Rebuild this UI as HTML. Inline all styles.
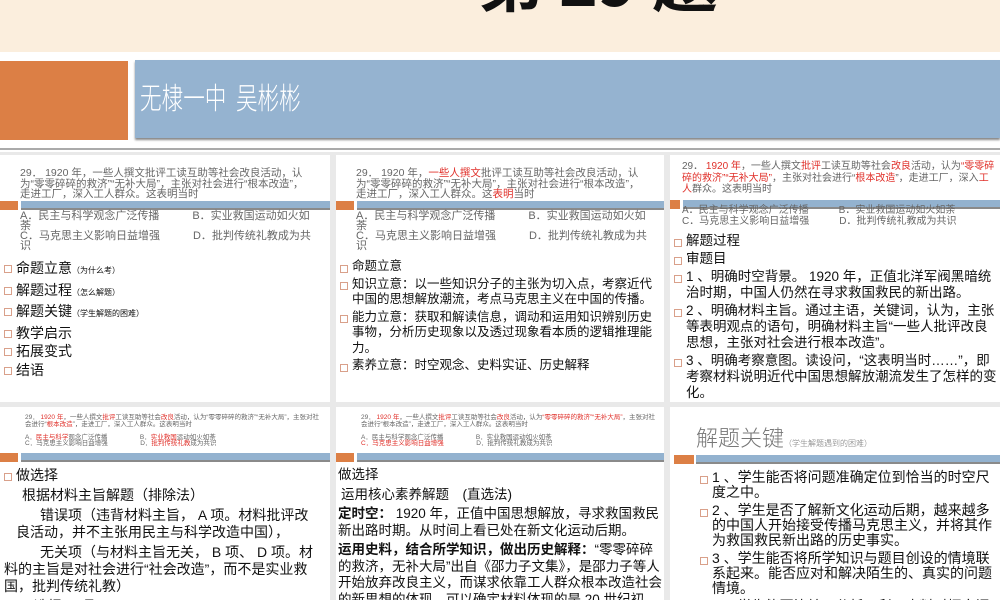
<!DOCTYPE html>
<html><head><meta charset="utf-8"><style>
*{margin:0;padding:0;box-sizing:border-box}
body{width:1000px;height:600px;overflow:hidden;background:#e9e9e9;position:relative;font-family:"Liberation Sans","Noto Sans CJK SC",sans-serif;color:#111}
.a{position:absolute}
.cell{position:absolute;background:#fff;overflow:hidden}
.q{position:absolute;font-size:10.5px;line-height:10.5px;color:#666}
.r{color:#e0302a}
.bar{position:absolute;height:9px;left:0;right:0}
.bar i{position:absolute;left:0;top:0;height:9px;background:#dc7f45}
.bar b{position:absolute;top:0;right:0;height:9px;background:#93b2cf;border-bottom:2px solid #8a8a8a}
.li{position:relative;padding-left:14px}
.li:before{content:"";position:absolute;left:2px;top:.45em;width:6px;height:6px;border:1px solid #d9a08a}
</style></head><body>
<div class="a" style="left:0;top:0;width:1000px;height:52px;background:#fbeedd"></div>
<div class="a" style="left:478px;top:-70px;font-size:66px;font-weight:bold;color:#111;font-family:'Noto Sans CJK SC',sans-serif">第 29 题</div>
<div class="a" style="left:0;top:52px;width:1000px;height:100px;background:#fff"></div>
<div class="a" style="left:0;top:61px;width:128px;height:79px;background:#dc7f45"></div>
<div class="a" style="left:135px;top:60px;width:865px;height:78px;background:#95b3d0;box-shadow:0 2px 2px #888"></div>
<div class="a" style="left:140px;top:74px;font-size:30px;color:#fff;font-family:'Noto Sans CJK SC',sans-serif;font-weight:300;transform:scaleX(0.72);transform-origin:left top;white-space:nowrap">无棣一中&nbsp; 吴彬彬</div>
<div class="a" style="left:0;top:148px;width:1000px;height:2px;background:#aaa"></div>

<div class="cell" style="left:0;top:155px;width:330px;height:247px">
<div class="q" style="left:20px;top:13px;width:290px">29． 1920 年，一些人撰文批评工读互助等社会改良活动，认为“零零碎碎的救济”“无补大局”，主张对社会进行“根本改造”，走进工厂，深入工人群众。这表明当时</div>
<div class="bar" style="top:46px"><i style="width:18px"></i><b style="left:21px"></b></div>
<div class="q" style="left:20px;top:56px;width:300px;font-size:11px;line-height:10px">A．民主与科学观念广泛传播　　　B．实业救国运动如火如荼<br>C．马克思主义影响日益增强　　　D．批判传统礼教成为共识</div>
<div class="a" style="left:2px;top:104px;font-size:14px;line-height:18.5px">
<div class="li">命题立意<small style="font-size:8px">（为什么考）</small></div>
<div class="li">解题过程<small style="font-size:8px">（怎么解题）</small></div>
<div class="li">解题关键<small style="font-size:8px">（学生解题的困难）</small></div>
<div class="li">教学启示</div><div class="li">拓展变式</div><div class="li">结语</div></div>
</div>

<div class="cell" style="left:336px;top:155px;width:328px;height:247px">
<div class="q" style="left:20px;top:13px;width:290px">29． 1920 年，<span class="r">一些人撰文</span>批评工读互助等社会改良活动，认为“零零碎碎的救济”“无补大局”，主张对社会进行“根本改造”，走进工厂，深入工人群众。这<span class="r">表明</span>当时</div>
<div class="bar" style="top:46px"><i style="width:18px"></i><b style="left:21px"></b></div>
<div class="q" style="left:20px;top:56px;width:300px;font-size:11px;line-height:10px">A．民主与科学观念广泛传播　　　B．实业救国运动如火如荼<br>C．马克思主义影响日益增强　　　D．批判传统礼教成为共识</div>
<div class="a" style="left:2px;top:104px;width:324px;font-size:12.5px;line-height:15.5px">
<div class="li" style="margin-bottom:2px">命题立意</div>
<div class="li" style="margin-bottom:2px">知识立意：以一些知识分子的主张为切入点，考察近代中国的思想解放潮流，考点马克思主义在中国的传播。</div>
<div class="li" style="margin-bottom:2px">能力立意：获取和解读信息，调动和运用知识辨别历史事物，分析历史现象以及透过现象看本质的逻辑推理能力。</div>
<div class="li">素养立意：时空观念、史料实证、历史解释</div></div>
</div>

<div class="cell" style="left:670px;top:155px;width:330px;height:247px">
<div class="q" style="left:12px;top:6px;width:315px;font-size:10px;line-height:11.5px">29． <span class="r">1920 年</span>，一些人撰文<span class="r">批评</span>工读互助等社会<span class="r">改良</span>活动，认为<span class="r">“零零碎碎的救济”“无补大局”</span>，主张对社会进行“<span class="r">根本改造</span>”，走进工厂，深入<span class="r">工人</span>群众。这表明当时</div>
<div class="bar" style="top:45px"><i style="width:10px"></i><b style="left:13px"></b></div>
<div class="q" style="left:12px;top:51px;width:315px;font-size:10px;line-height:10.5px">A．民主与科学观念广泛传播　　　B．实业救国运动如火如荼<br>C．马克思主义影响日益增强　　　D．批判传统礼教成为共识</div>
<div class="a" style="left:2px;top:78px;width:326px;font-size:13.5px;line-height:16px">
<div class="li" style="margin-bottom:2px">解题过程</div>
<div class="li" style="margin-bottom:2px">审题目</div>
<div class="li" style="margin-bottom:2px">1 、明确时空背景。 1920 年，正值北洋军阀黑暗统治时期，中国人仍然在寻求救国救民的新出路。</div>
<div class="li" style="margin-bottom:2px">2 、明确材料主旨。通过主语，关键词，认为，主张等表明观点的语句，明确材料主旨“一些人批评改良思想，主张对社会进行根本改造”。</div>
<div class="li">3 、明确考察意图。读设问，“这表明当时……”，即考察材料说明近代中国思想解放潮流发生了怎样的变化。</div></div>
</div>

<div class="cell" style="left:0;top:407px;width:330px;height:193px">
<div class="q" style="left:25px;top:8px;width:295px;font-size:6.5px;line-height:6.5px">29． <span class="r">1920 年</span>，一些人撰文<span class="r">批评</span>工读互助等社会<span class="r">改良</span>活动，认为“零零碎碎的救济”“无补大局”，主张对社会进行“<span class="r">根本改造</span>”，走进工厂，深入工人群众。这表明当时<br><br>A．<span class="r">民主与科学</span>观念广泛传播　　　　　B．<span class="r">实业救国</span>运动如火如荼<br>C．马克思主义影响日益增强　　　　　D．<span class="r">批判传统礼教</span>成为共识</div>
<div class="bar" style="top:46px"><i style="width:18px"></i><b style="left:21px"></b></div>
<div class="a" style="left:2px;top:60px;width:318px;font-size:14px;line-height:17px">
<div class="li" style="margin-bottom:3px">做选择</div>
<div style="padding-left:20px;margin-bottom:3px">根据材料主旨解题（排除法）</div>
<div style="padding-left:14px;text-indent:24px;margin-bottom:3px">错误项（违背材料主旨， A 项。材料批评改良活动，并不主张用民主与科学改造中国），</div>
<div style="padding-left:2px;text-indent:36px;margin-bottom:3px">无关项（与材料主旨无关， B 项、 D 项。材料的主旨是对社会进行“社会改造”，而不是实业救国，批判传统礼教）</div>
<div style="padding-left:32px">选择 C 项</div></div>
</div>

<div class="cell" style="left:336px;top:407px;width:328px;height:193px">
<div class="q" style="left:25px;top:8px;width:295px;font-size:6.5px;line-height:6.5px">29． <span class="r">1920 年</span>，一些人撰文<span class="r">批评</span>工读互助等社会<span class="r">改良</span>活动，认为<span class="r">“零零碎碎的救济”“无补大局”</span>，主张对社会进行“根本改造”，走进工厂，深入工人群众。这表明当时<br><br>A．民主与科学观念广泛传播　　　　　B．实业救国运动如火如荼<br><span class="r">C．马克思主义影响日益增强</span>　　　　　D．批判传统礼教成为共识</div>
<div class="bar" style="top:46px"><i style="width:18px"></i><b style="left:21px"></b></div>
<div class="a" style="left:2px;top:60px;width:324px;font-size:13.5px;line-height:16.5px">
<div style="margin-bottom:3px">做选择</div>
<div style="padding-left:3px;margin-bottom:3px">运用核心素养解题　(直选法)</div>
<div style="margin-bottom:3px"><b>定时空：</b> 1920 年，正值中国思想解放，寻求救国救民新出路时期。从时间上看已处在新文化运动后期。</div>
<div><b>运用史料，结合所学知识，做出历史解释：</b>“零零碎碎的救济，无补大局”出自《邵力子文集》，是邵力子等人开始放弃改良主义，而谋求依靠工人群众根本改造社会的新思想的体现。可以确定材料体现的是 20 世纪初，中国工人阶级力量逐步壮大，马克思主义被一些先进的知识分子</div></div>
</div>

<div class="cell" style="left:670px;top:407px;width:330px;height:193px">
<div class="a" style="left:26px;top:14px;font-size:22px;color:#777;font-family:'Noto Sans CJK SC',sans-serif;font-weight:300">解题关键<span style="font-size:8px">（学生解题遇到的困难）</span></div>
<div class="bar" style="top:48px"><i style="width:20px;left:4px"></i><b style="left:26px"></b></div>
<div class="a" style="left:28px;top:63px;width:300px;font-size:14px;line-height:15px">
<div class="li" style="margin-bottom:3px">1 、学生能否将问题准确定位到恰当的时空尺度之中。</div>
<div class="li" style="margin-bottom:3px">2 、学生是否了解新文化运动后期，越来越多的中国人开始接受传播马克思主义，并将其作为救国救民新出路的历史事实。</div>
<div class="li" style="margin-bottom:3px">3 、学生能否将所学知识与题目创设的情境联系起来。能否应对和解决陌生的、真实的问题情境。</div>
<div class="li">4 、学生能否比较、分析、利用史料对探究问题</div></div>
</div>
</body></html>
